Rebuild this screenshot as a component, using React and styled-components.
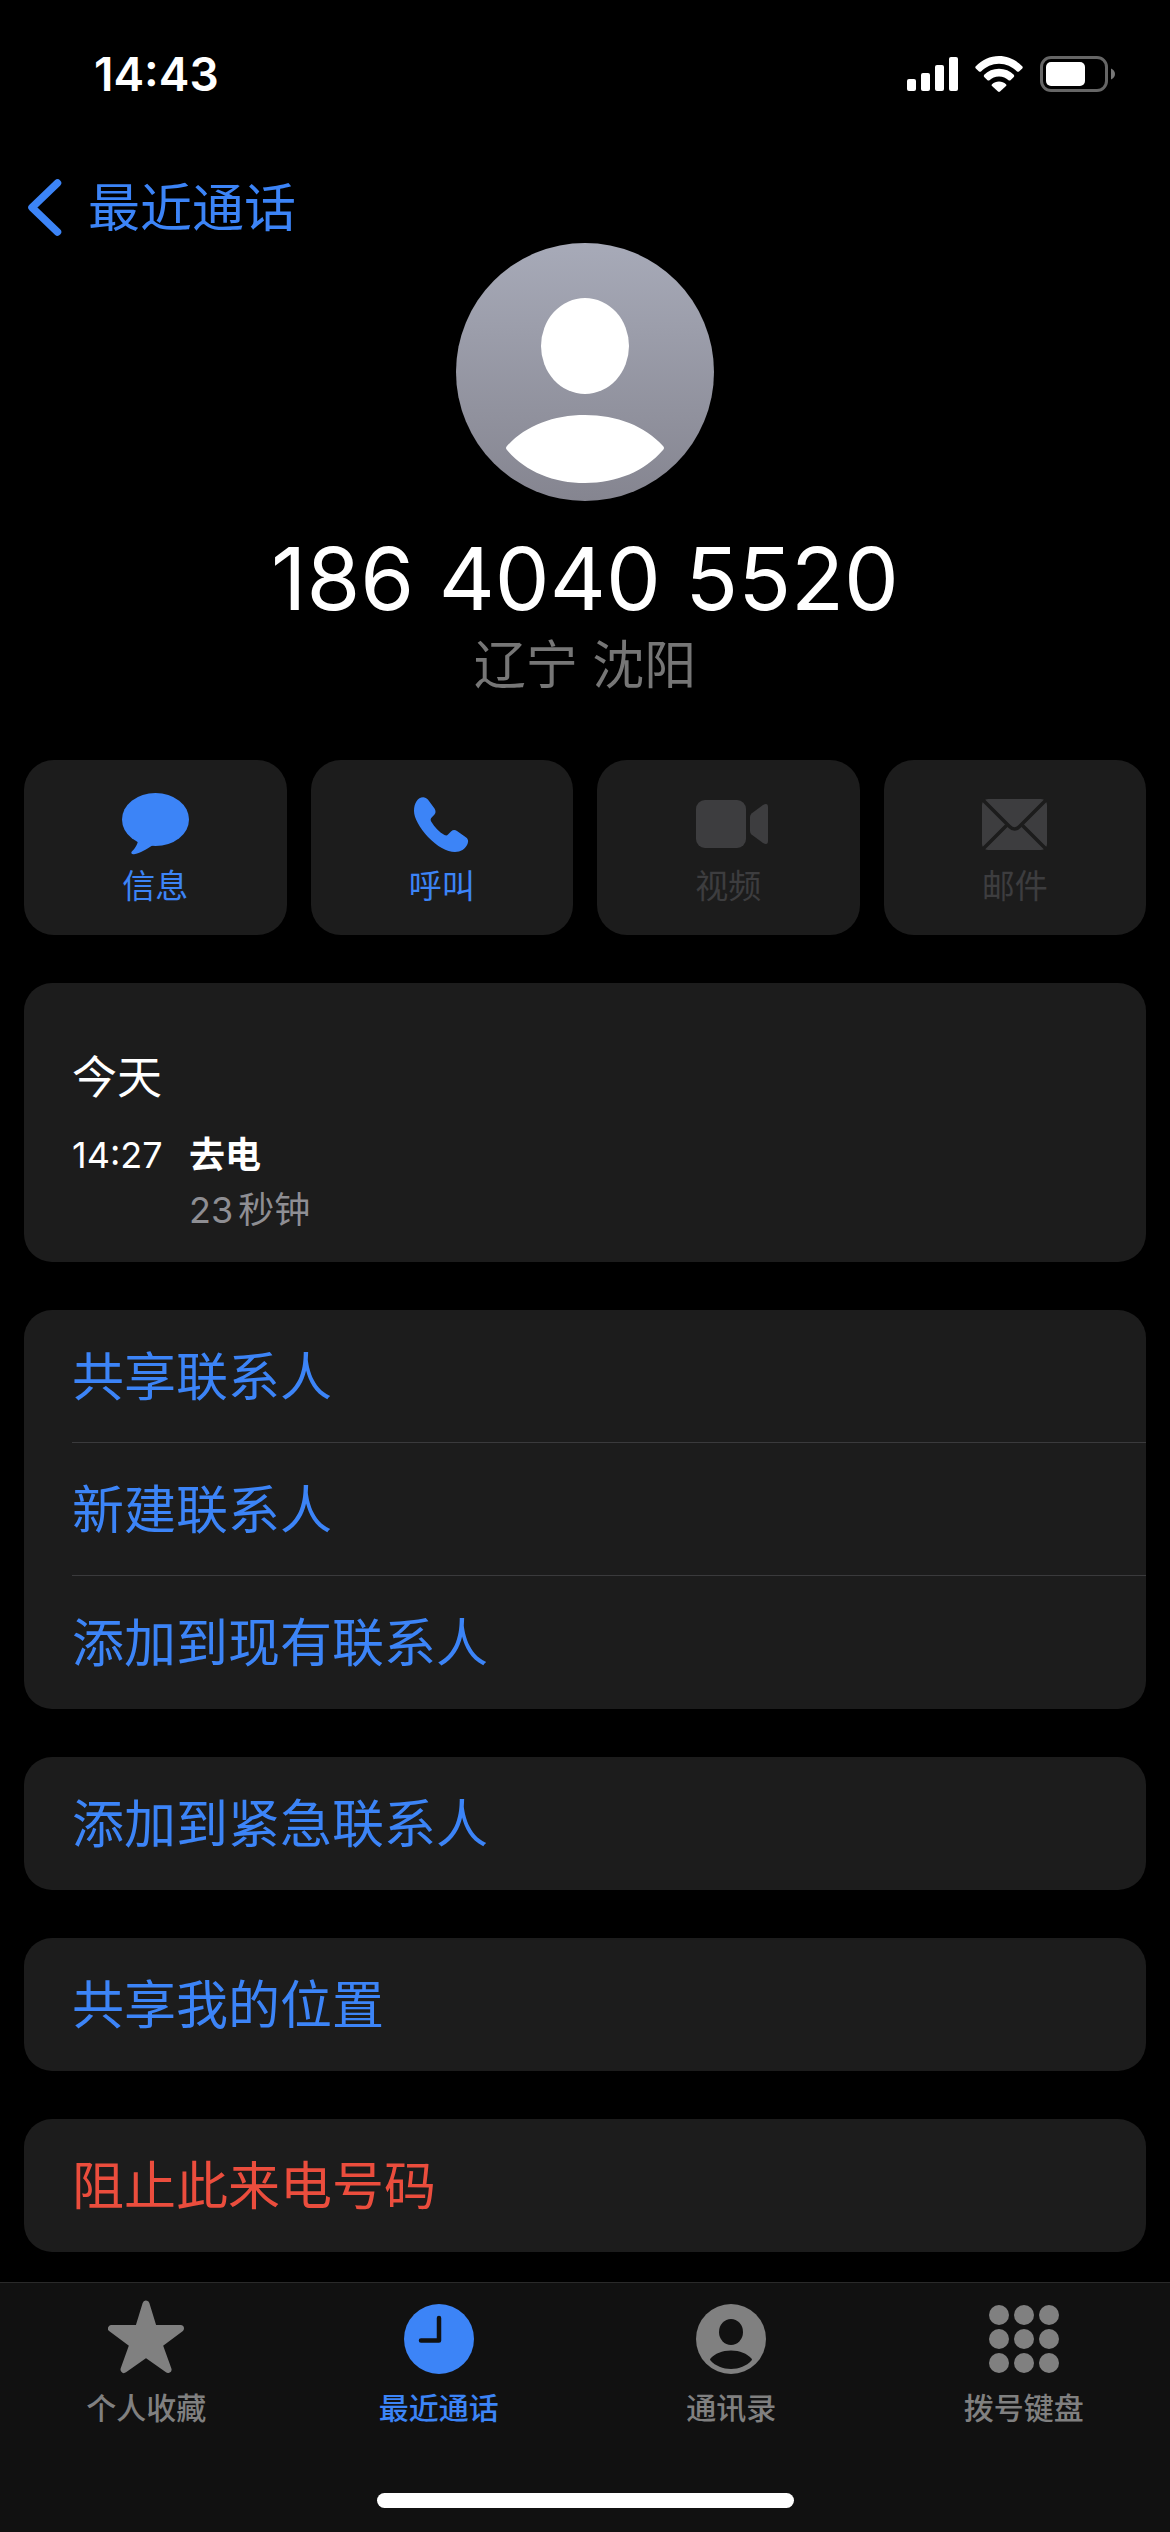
import React, { useState } from 'react';
import styled, { createGlobalStyle } from 'styled-components';

const BLUE = '#3c84f7';
const RED = '#eb4d3d';
const CARD = '#1c1c1c';
const BAR = '#111111';

const GlobalStyle = createGlobalStyle`
  * {
    box-sizing: border-box;
  }

  body {
    margin: 0;
    background-color: black;
    color: white;
    font-family: Inter, "Noto Sans CJK SC", sans-serif;
  }

  button {
    padding: 0;
    border: none;
    background: none;
    color: inherit;
    font: inherit;
  }

  svg {
    display: block;
  }
`;

const Page = styled.div`
  display: flex;
  flex-direction: column;
  min-height: 100vh;
`;

const StatusBar = styled.div`
  display: flex;
  justify-content: space-between;
  align-items: center;
  height: 148px;
  padding: 0 55px 0 94px;
`;

const Clock = styled.div`
  font-size: 46px;
  line-height: 56px;
  font-weight: 600;
`;

const StatusIcons = styled.div`
  display: flex;
  align-items: center;
  gap: 17px;
`;

const NavBar = styled.div`
  display: flex;
  padding: 31px 28px 4px;
`;

const BackButton = styled.button`
  display: flex;
  align-items: flex-start;
  gap: 26px;
  color: ${BLUE};
  font-size: 52px;
  line-height: 60px;
  font-weight: 400;
`;

const Contact = styled.div`
  display: flex;
  flex-direction: column;
  align-items: center;
`;

const PhoneNumber = styled.h1`
  margin: 28px 0 0;
  font-size: 87px;
  line-height: 100px;
  font-weight: 400;
`;

const Location = styled.div`
  color: #767676;
  font-size: 52px;
  line-height: 74px;
  font-weight: 400;
`;

const Content = styled.div`
  display: flex;
  flex-direction: column;
  gap: 48px;
  padding: 57px 24px 30px;
`;

const Actions = styled.div`
  display: grid;
  grid-template-columns: repeat(4, 1fr);
  gap: 24px;
`;

const ActionButton = styled.button`
  display: flex;
  flex-direction: column;
  align-items: center;
  height: 175px;
  padding-top: 32px;
  border-radius: 30px;
  background-color: ${CARD};
  color: ${BLUE};
  font-size: 33px;
  line-height: 44px;
  font-weight: 400;

  &:disabled {
    color: #3d3d3f;
  }
`;

const ActionIcon = styled.span`
  display: flex;
  justify-content: center;
  align-items: center;
  height: 64px;
  margin-bottom: 8px;
`;

const Card = styled.div`
  border-radius: 28px;
  background-color: ${CARD};
  overflow: hidden;
`;

const CallLog = styled(Card)`
  padding: 68px 48px 24px;
`;

const LogDay = styled.h2`
  margin: 0 0 23px;
  font-size: 45px;
  line-height: 54px;
  font-weight: 400;
`;

const LogEntry = styled.div`
  display: grid;
  grid-template-columns: 93px 1fr;
  column-gap: 24px;
  font-size: 36px;
  line-height: 55px;
`;

const LogKind = styled.div`
  font-weight: 700;
`;

const LogLength = styled.div`
  display: flex;
  gap: 5px;
  grid-column: 2;
  color: #8e8e93;
`;

const Row = styled.button`
  display: block;
  width: 100%;
  padding-left: 48px;
  color: ${(props) => (props.$danger ? RED : BLUE)};
  font-size: 52px;
  font-weight: 400;
  text-align: left;
`;

const RowText = styled.span`
  display: block;
  height: 133px;
  padding-top: 3px;
  line-height: 130px;

  ${Row}:not(:last-child) & {
    border-bottom: 1px solid #3a3a3c;
  }
`;

const TabBar = styled.nav`
  position: sticky;
  bottom: 0;
  margin-top: auto;
  padding: 16px 0 24px;
  border-top: 1px solid #2a2a2a;
  background-color: ${BAR};
`;

const Tabs = styled.div`
  display: grid;
  grid-template-columns: repeat(4, 1fr);
`;

const Tab = styled.button`
  display: flex;
  flex-direction: column;
  align-items: center;
  gap: 10px;
  color: ${(props) => (props.$active ? BLUE : '#808080')};
  font-size: 30px;
  line-height: 38px;
  font-weight: 500;
`;

const TabIcon = styled.span`
  display: flex;
  align-items: center;
  height: 80px;
`;

const HomeIndicator = styled.div`
  width: 417px;
  height: 15px;
  margin: 66px auto 0;
  border-radius: 8px;
  background-color: white;
`;

// icons
const SignalIcon = () => (
  <svg width="51" height="34" fill="currentColor">
    <rect x="0" y="22" width="9" height="12" rx="2" />
    <rect x="14" y="16" width="9" height="18" rx="2" />
    <rect x="28" y="8" width="9" height="26" rx="2" />
    <rect x="42" y="0" width="9" height="34" rx="2" />
  </svg>
);

const WifiIcon = () => (
  <svg width="48" height="36" fill="currentColor">
    <path d="M.8 10.2C7 4 15 0 24 0S41 4 47.2 10.2Q48.3 11.3 47.3 12.4L44 15.4Q43 16.3 42 15.4C37 10.7 31 7.7 24 7.7S11 10.7 6 15.4Q5 16.3 4 15.4L.8 12.4Q-.3 11.3 .8 10.2Z" />
    <path d="M9.2 18.8C13 15 18 12.8 24 12.8S35 15 38.8 18.8Q39.8 20 38.8 21L35.5 24.2Q34.5 25 33.5 24.2C31 22 28 20.5 24 20.5S17 22 14.5 24.2Q13.5 25 12.5 24.2L9.2 21Q8.2 20 9.2 18.8Z" />
    <path d="M17 28.2C19 26.3 21.3 25.4 24 25.4S29 26.3 31 28.2Q31.8 29.2 31 30L25 35.5Q24 36.4 23 35.5L17 30Q16.2 29.2 17 28.2Z" />
  </svg>
);

const BatteryIcon = () => (
  <svg width="75" height="36">
    <rect x="1.5" y="1.5" width="65" height="33" rx="9.5" fill="none" stroke="#666" strokeWidth="3" />
    <rect x="6" y="6" width="39" height="24" rx="5" fill="white" />
    <path d="M71 12.5C73.5 13.5 75 15.5 75 18S73.5 22.5 71 23.5Z" fill="#777" />
  </svg>
);

const BackIcon = () => (
  <svg width="34" height="58" fill="none" stroke="currentColor" strokeWidth="7.5" strokeLinecap="round" strokeLinejoin="round">
    <path d="M29.5 4L4 28.5L29.5 53" />
  </svg>
);

const Avatar = () => (
  <svg width="258" height="258">
    <defs>
      <linearGradient id="avatar" x1="0" y1="0" x2="0" y2="1">
        <stop offset="0" stopColor="#a7aab8" />
        <stop offset="1" stopColor="#858590" />
      </linearGradient>
    </defs>
    <circle cx="129" cy="129" r="129" fill="url(#avatar)" />
    <ellipse cx="129" cy="103" rx="44" ry="48" fill="white" />
    <path d="M51 207Q49 205 51 203C69 183 97 172 129 172S189 183 207 203Q209 205 207 207C189 228 161 240 129 240S69 228 51 207Z" fill="white" />
  </svg>
);

const MessageIcon = () => (
  <svg width="67" height="62" fill="currentColor">
    <ellipse cx="33.5" cy="26.5" rx="33.5" ry="26.5" />
    <path d="M16 47C16 51 13 55.5 10 58.3C8.5 60 9.5 61.5 12 61.2C18 60.5 25 56 31 52Z" />
  </svg>
);

const PhoneIcon = () => (
  <svg width="55" height="55" fill="currentColor">
    <path d="M0 14C0 6 4 0 9.5 .3C12 .5 13.5 2 15 4L20.5 11.5C22 14 21.8 16 20.5 17.5L17.2 21C16.3 22.2 16.6 23.5 17.5 25C20.5 30 25 35 30.5 38C32 38.8 33 38.6 34 37.6L37 34.5C39 32.7 41 32.7 43 34L51.5 40C54.5 42.2 54.6 44 53.5 47C51.5 52 46.5 55 41 55C33 55 23 49.5 14 40C5.5 30.5 0 21 0 14Z" />
  </svg>
);

const VideoIcon = () => (
  <svg width="80" height="48" viewBox="-8 0 80 48" fill="currentColor">
    <rect width="50" height="48" rx="9" />
    <path d="M54 17Q54 15 55.5 13.5L67 5Q72 2.5 72 7V41Q72 45.5 67 43L55.5 34.5Q54 33 54 31Z" />
  </svg>
);

const MailIcon = () => (
  <svg width="65" height="51">
    <rect width="65" height="51" rx="6" fill="currentColor" />
    <g fill="none" stroke={CARD} strokeWidth="3.5">
      <path d="M0 0L27.5 27.5Q32.5 32.5 37.5 27.5L65 0" />
      <path d="M0 51L24.5 26.5M65 51L40.5 26.5" />
    </g>
  </svg>
);

const StarIcon = () => (
  <svg width="76" height="78" fill="currentColor" stroke="currentColor" strokeWidth="7" strokeLinejoin="round">
    <path d="M38 4L45.5 28.5H72.5L51 44.5L60 69.5L38 54L16 69.5L25 44.5L3.5 28.5H30.5Z" />
  </svg>
);

const RecentsIcon = () => (
  <svg width="70" height="70">
    <circle cx="35" cy="35" r="35" fill="currentColor" />
    <path d="M35 14V36.5H17" fill="none" stroke={BAR} strokeWidth="4.5" strokeLinecap="round" strokeLinejoin="round" />
  </svg>
);

const ContactsIcon = () => (
  <svg width="70" height="70">
    <circle cx="35" cy="35" r="35" fill="currentColor" />
    <ellipse cx="35" cy="28" rx="12" ry="13" fill={BAR} />
    <path d="M14.5 56.5Q13.5 55.5 14.5 54.5C19 49.5 26 46.5 35 46.5S51 49.5 55.5 54.5Q56.5 55.5 55.5 56.5C50.5 62 43 65 35 65S19.5 62 14.5 56.5Z" fill={BAR} />
  </svg>
);

const KeypadIcon = () => (
  <svg width="70" height="68" fill="currentColor">
    {[10, 34, 58].map((y) =>
      [10, 35, 60].map((x) => <circle key={`${x}-${y}`} cx={x} cy={y} r="10" />)
    )}
  </svg>
);

const actions = [
  { label: '信息', icon: <MessageIcon /> },
  { label: '呼叫', icon: <PhoneIcon /> },
  { label: '视频', icon: <VideoIcon />, disabled: true },
  { label: '邮件', icon: <MailIcon />, disabled: true },
];

const groups = [
  [{ label: '共享联系人' }, { label: '新建联系人' }, { label: '添加到现有联系人' }],
  [{ label: '添加到紧急联系人' }],
  [{ label: '共享我的位置' }],
  [{ label: '阻止此来电号码', danger: true }],
];

const tabs = [
  { label: '个人收藏', icon: <StarIcon /> },
  { label: '最近通话', icon: <RecentsIcon /> },
  { label: '通讯录', icon: <ContactsIcon /> },
  { label: '拨号键盘', icon: <KeypadIcon /> },
];

function App() {
  const [activeTab, updateActiveTab] = useState('最近通话');

  return (
    <Page>
      <GlobalStyle />
      <StatusBar>
        <Clock>14:43</Clock>
        <StatusIcons>
          <SignalIcon />
          <WifiIcon />
          <BatteryIcon />
        </StatusIcons>
      </StatusBar>

      <NavBar>
        <BackButton>
          <BackIcon />
          最近通话
        </BackButton>
      </NavBar>

      <Contact>
        <Avatar />
        <PhoneNumber>186 4040 5520</PhoneNumber>
        <Location>辽宁 沈阳</Location>
      </Contact>

      <Content>
        <Actions>
          {actions.map((action) => (
            <ActionButton key={action.label} disabled={action.disabled}>
              <ActionIcon>{action.icon}</ActionIcon>
              {action.label}
            </ActionButton>
          ))}
        </Actions>

        <CallLog>
          <LogDay>今天</LogDay>
          <LogEntry>
            <div>14:27</div>
            <LogKind>去电</LogKind>
            <LogLength>
              <span>23</span>
              <span>秒钟</span>
            </LogLength>
          </LogEntry>
        </CallLog>

        {groups.map((rows) => (
          <Card key={rows[0].label}>
            {rows.map((row) => (
              <Row key={row.label} $danger={row.danger}>
                <RowText>{row.label}</RowText>
              </Row>
            ))}
          </Card>
        ))}
      </Content>

      <TabBar>
        <Tabs>
          {tabs.map((tab) => (
            <Tab
              key={tab.label}
              $active={tab.label === activeTab}
              onClick={() => updateActiveTab(tab.label)}
            >
              <TabIcon>{tab.icon}</TabIcon>
              {tab.label}
            </Tab>
          ))}
        </Tabs>
        <HomeIndicator />
      </TabBar>
    </Page>
  );
}

export default App;
